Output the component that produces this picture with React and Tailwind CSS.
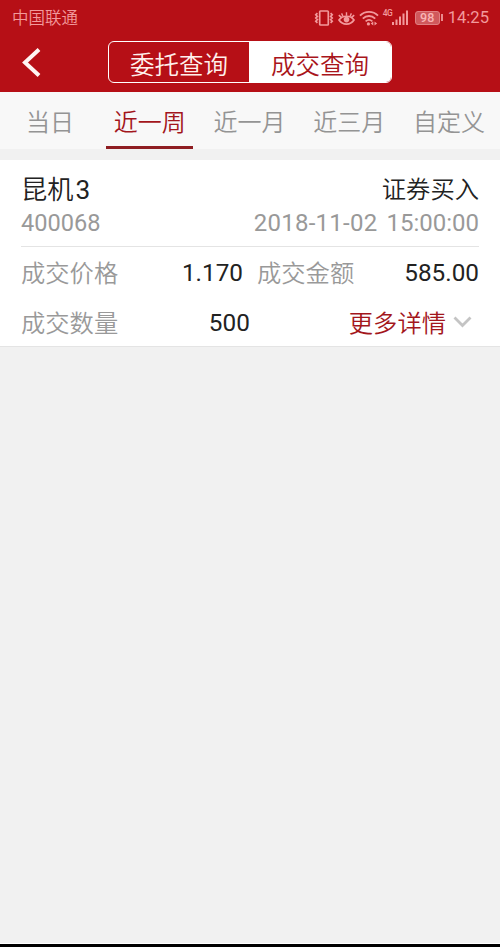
import React, { useState } from 'react';
import clsx from 'clsx';

const TABS = ['当日', '近一周', '近一月', '近三月', '自定义'];

const VibrateIcon = () => (
  <svg width="20" height="16" viewBox="0 0 20 16" fill="none" stroke="currentColor">
    <rect x="5.7" y="1" width="8.6" height="14" rx="0.8" strokeWidth="1.7" />
    <path d="M3.4 3.2 1.8 4.8 3.4 6.4 1.8 8 3.4 9.6 1.8 11.2 3.4 12.8" strokeWidth="1.7" />
    <path d="M16.6 3.2 18.2 4.8 16.6 6.4 18.2 8 16.6 9.6 18.2 11.2 16.6 12.8" strokeWidth="1.7" />
  </svg>
);

const EyeIcon = () => (
  <svg width="17" height="16" viewBox="0 0 17 16" fill="none" stroke="currentColor">
    <path d="M.8 5.2 3.6 7.6M16.2 5.2 13.4 7.6" strokeWidth="1.6" />
    <path d="M1 10C4.5 5 12.5 5 16 10 12.5 15.4 4.5 15.4 1 10Z" strokeWidth="1.7" />
    <circle cx="8.5" cy="9.6" r="2.8" fill="currentColor" stroke="none" />
    <path d="M8.5 5.8V2.2M4.9 6.2 3.6 3.4M12.1 6.2 13.4 3.4" strokeWidth="1.4" />
  </svg>
);

const WifiIcon = () => (
  <svg width="20" height="16" viewBox="0 0 20 16" fill="none" stroke="currentColor">
    <path d="M1 5.6C6 .6 14 .6 19 5.6" strokeWidth="1.9" />
    <path d="M3.8 8.6C7.4 5.2 12.6 5.2 16.2 8.6" strokeWidth="1.9" />
    <path d="M6.6 11.4C8.6 9.6 11.4 9.6 13.4 11.4" strokeWidth="1.7" />
    <circle cx="9.4" cy="13.9" r="1.6" fill="currentColor" stroke="none" />
    <path d="M14.3 11.5V15.5L11.7 13.5ZM15.5 11.5V15.5L18.1 13.5Z" fill="currentColor" stroke="none" />
  </svg>
);

const SignalIcon = () => (
  <svg width="16" height="15" viewBox="0 0 16 15" fill="currentColor">
    <rect x="0" y="12" width="2" height="3" />
    <rect x="3.5" y="9.5" width="2" height="5.5" />
    <rect x="7" y="6.5" width="2" height="8.5" />
    <rect x="10.5" y="3.5" width="2" height="11.5" />
    <rect x="14" y="0.5" width="2" height="14.5" />
  </svg>
);

const StatusBar = () => (
  <div className="flex h-[35px] items-center pl-3 pr-[11px] text-[#f29a9c]">
    <span className="pt-[3px] text-[16.5px] font-[350] leading-none">中国联通</span>
    <div className="ml-auto flex items-center">
      <VibrateIcon />
      <span className="ml-[4px]"><EyeIcon /></span>
      <span className="ml-[4px]"><WifiIcon /></span>
      <span className="mb-[9px] ml-[4px] w-[9px] text-[8.5px] font-medium leading-none tracking-[-0.5px]">4G</span>
      <SignalIcon />
      <div className="ml-[7px] flex h-[14px] w-[25px] items-center justify-center rounded-[3px] border border-[#e08082] bg-[#d0595c] pt-px text-[12.5px] font-medium leading-none text-[#f9b4b4]">
        98
      </div>
      <div className="ml-px h-[7px] w-[2px] bg-[#e98b8d]" />
      <span className="ml-[5px] pt-[2px] text-[16.6px] leading-none">14:25</span>
    </div>
  </div>
);

const Header = () => (
  <div className="flex h-[57px] items-start">
    <svg className="ml-[21px] mt-[12px]" width="22" height="31" viewBox="0 0 22 31" fill="none" stroke="#fff5f3" strokeWidth="4">
      <path d="M18 2.5 4 15.5 18 28.5" />
    </svg>
    <div className="ml-[65px] mt-[6px] flex h-[42px] w-[284px] overflow-hidden rounded-[6px] border-[1.5px] border-white text-[24.5px] font-[350] leading-none">
      <button className="flex w-[140px] items-center justify-center pt-[8px] text-[#fff0ec]">委托查询</button>
      <button className="flex flex-1 items-center justify-center bg-white pt-[8px] text-[#a9151b]">成交查询</button>
    </div>
  </div>
);

const Tabs = ({ active, onChange }) => (
  <div className="grid h-[57px] grid-cols-5 bg-[#f8f8f8] pr-px">
    {TABS.map((tab) => (
      <button
        key={tab}
        onClick={() => onChange(tab)}
        className={clsx(
          'mx-auto flex h-[57px] w-[87px] items-center justify-center border-b-[3px] pt-[7px] text-[24px] font-[350] leading-none',
          tab === active ? 'border-[#8f1d22] text-[#a3161c]' : 'border-transparent text-[#949494]'
        )}
      >
        {tab}
      </button>
    ))}
  </div>
);

const TradeCard = ({ trade }) => {
  const [date, time] = trade.time.split(' ');

  return (
    <div className="h-[187px] border-b border-[#e4e4e4] bg-white px-[21px] text-[24.3px] font-[350] leading-none text-[#222]">
      <div className="flex h-[87px] flex-col border-b border-[#e4e4e4] pt-[12px]">
        <div className="flex h-[34px] items-center justify-between pt-[2px]">
          <span className="text-[26.2px]">
            {trade.name}
            <span className="ml-[2px] font-normal">{trade.suffix}</span>
          </span>
          <span>{trade.side}</span>
        </div>
        <div className="flex h-[34px] items-center justify-between text-[24px] font-normal text-[#999]">
          <span className="pt-px text-[23.6px]">{trade.code}</span>
          <span className="flex gap-[9px]">
            <span className="tracking-[0.25px]">{date}</span>
            <span>{time}</span>
          </span>
        </div>
      </div>
      <div className="flex h-[52px] items-center">
        <span className="pt-[2px] text-[#999]">成交价格</span>
        <span className="ml-auto font-normal">{trade.price}</span>
        <span className="ml-[14px] flex w-[222px] items-center justify-between">
          <span className="pt-[2px] text-[#999]">成交金额</span>
          <span className="font-normal">{trade.amount}</span>
        </span>
      </div>
      <div className="flex h-[47px] items-center">
        <span className="pt-[3px] text-[#999]">成交数量</span>
        <span className="ml-auto pt-px font-normal">{trade.quantity}</span>
        <button className="ml-[99px] flex items-center pt-[3px] text-[#a3161c]">
          更多详情
          <svg className="mb-[3px] ml-[7px] mr-[7px]" width="19" height="12" viewBox="0 0 19 12" fill="none" stroke="#c4c4c4" strokeWidth="2.8">
            <path d="M1.5 1.5 9.5 9.5 17.5 1.5" />
          </svg>
        </button>
      </div>
    </div>
  );
};

const App = () => {
  const [tab, setTab] = useState('近一周');

  return (
    <div className="flex h-[947px] w-[500px] flex-col overflow-hidden bg-[#f1f1f1] font-[Roboto,'Noto_Sans_CJK_SC',sans-serif]">
      <div className="h-[92px] bg-[#b60f16]">
        <StatusBar />
        <Header />
      </div>
      <Tabs active={tab} onChange={setTab} />
      <div className="mt-[11px]">
        <TradeCard
          trade={{
            name: '昆机',
            suffix: '3',
            side: '证券买入',
            code: '400068',
            time: '2018-11-02 15:00:00',
            price: '1.170',
            amount: '585.00',
            quantity: '500',
          }}
        />
      </div>
      <div className="mt-auto h-1 border-t border-white bg-black" />
    </div>
  );
};

export default App;
